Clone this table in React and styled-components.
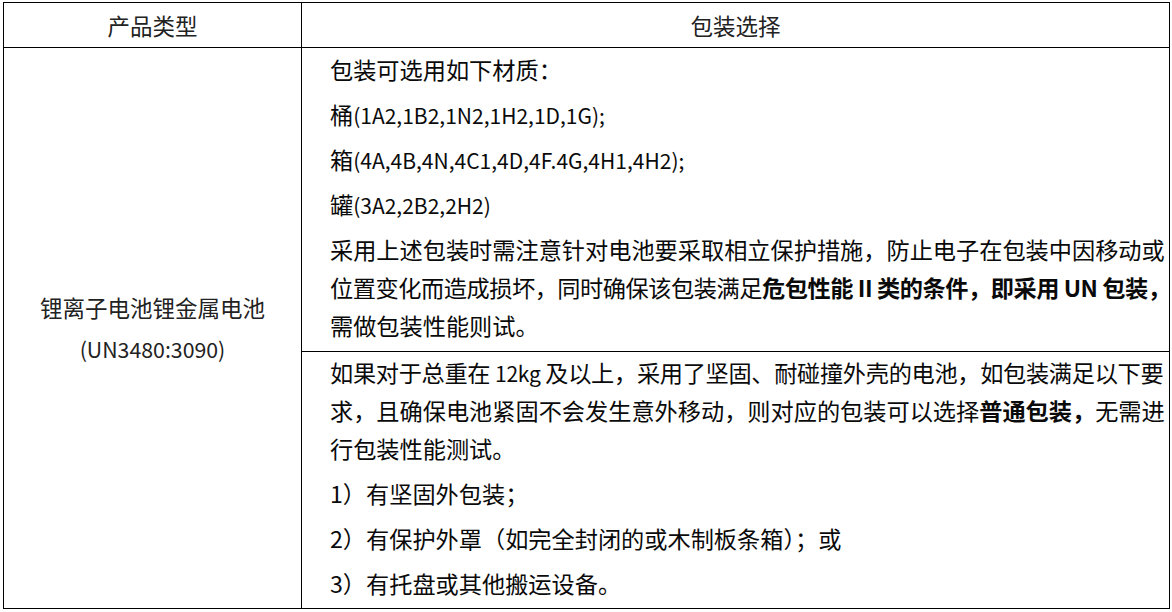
import React from "react";
import styled, { createGlobalStyle } from "styled-components";

const GlobalStyle = createGlobalStyle`
  html, body {
    margin: 0;
    padding: 0;
    background: #ffffff;
  }
  body {
    font-family: "Noto Sans CJK SC", "Liberation Sans", sans-serif;
    color: #111111;
  }
`;

const Table = styled.table`
  border-collapse: collapse;
  table-layout: fixed;
  width: 1166px;
  margin: 2px 0 0 3px;
  font-size: 22.5px;
`;

const HeadCell = styled.th`
  height: 44px;
  padding: 0;
  border: 1px solid #000;
  font-weight: 400;
  text-align: center;
  vertical-align: middle;
  color: #222;
  line-height: 44px;
`;

const TypeCell = styled.td`
  border: 1px solid #000;
  padding: 0;
  text-align: center;
  vertical-align: middle;
  line-height: 41px;
  color: #222;
`;

const OptionCell = styled.td`
  border: 1px solid #000;
  padding: ${(p) => (p.$first ? "2px 0 7px 28px" : "1px 0 6px 28px")};
  vertical-align: top;
  text-align: left;
  font-size: 23.2px;
  color: #0a0a0a;
`;

const Para = styled.p`
  margin: 0;
  line-height: 38px;
  white-space: nowrap;

  & + & {
    margin-top: 7px;
  }

  b {
    font-weight: 700;
  }
`;

const Line = styled.span`
  display: block;
  letter-spacing: ${(p) => p.$squeeze || 0}px;
`;

const Latin = styled.span`
  font-size: ${(p) => p.$size || 21}px;
  line-height: 1;
`;

export default function App() {
  return (
    <>
      <GlobalStyle />
      <Table>
        <colgroup>
          <col style={{ width: 298 }} />
          <col style={{ width: 868 }} />
        </colgroup>
        <thead>
          <tr>
            <HeadCell>产品类型</HeadCell>
            <HeadCell>包装选择</HeadCell>
          </tr>
        </thead>
        <tbody>
          <tr>
            <TypeCell rowSpan={2}>
              <Line>锂离子电池锂金属电池</Line>
              <Line>
                <Latin $size={21.3}>(UN3480:3090)</Latin>
              </Line>
            </TypeCell>
            <OptionCell $first>
              <Para>包装可选用如下材质：</Para>
              <Para>
                桶<Latin>(1A2,1B2,1N2,1H2,1D,1G);</Latin>
              </Para>
              <Para>
                箱<Latin>(4A,4B,4N,4C1,4D,4F.4G,4H1,4H2);</Latin>
              </Para>
              <Para>
                罐<Latin>(3A2,2B2,2H2)</Latin>
              </Para>
              <Para>
                <Line>采用上述包装时需注意针对电池要采取相立保护措施，防止电子在包装中因移动或</Line>
                <Line $squeeze={-0.45}>
                  位置变化而造成损坏，同时确保该包装满足<b>危包性能 II 类的条件，即采用 UN 包装，</b>
                </Line>
                <Line>需做包装性能则试。</Line>
              </Para>
            </OptionCell>
          </tr>
          <tr>
            <OptionCell>
              <Para>
                <Line $squeeze={-0.3}>
                  如果对于总重在 <Latin>12kg</Latin> 及以上，采用了坚固、耐碰撞外壳的电池，如包装满足以下要
                </Line>
                <Line>
                  求，且确保电池紧固不会发生意外移动，则对应的包装可以选择<b>普通包装，</b>无需进
                </Line>
                <Line>行包装性能测试。</Line>
              </Para>
              <Para>1）有坚固外包装；</Para>
              <Para>2）有保护外罩（如完全封闭的或木制板条箱）；或</Para>
              <Para>3）有托盘或其他搬运设备。</Para>
            </OptionCell>
          </tr>
        </tbody>
      </Table>
    </>
  );
}
